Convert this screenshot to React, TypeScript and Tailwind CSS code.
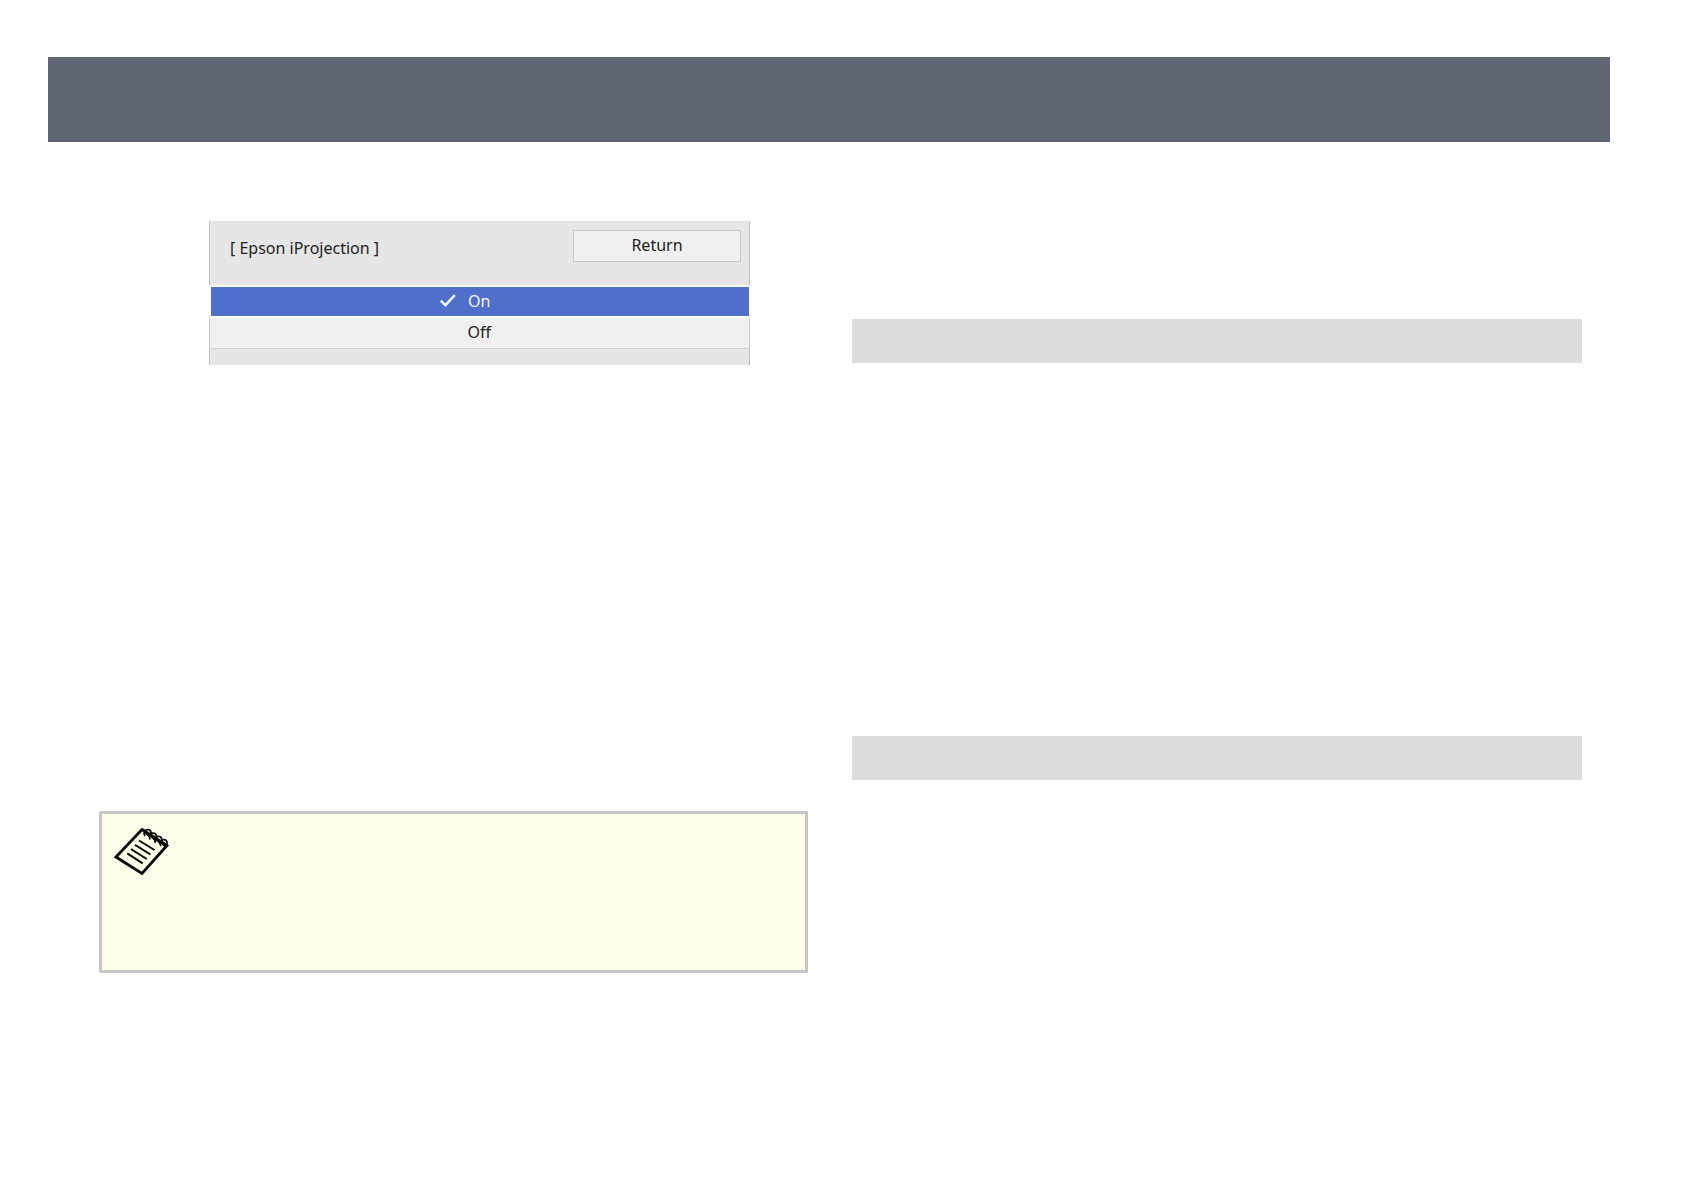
import React, { useState } from 'react';

type ProjectionMode = 'On' | 'Off';

const MODES: ProjectionMode[] = ['On', 'Off'];

const CheckIcon: React.FC = () => (
    <svg className="h-4 w-4" viewBox="0 0 16 16" fill="none" aria-hidden="true">
        <path d="M0.8 7.6L5.4 12.2L14.8 2.2" stroke="currentColor" strokeWidth="2.5" />
    </svg>
);

const NotebookIcon: React.FC = () => (
    <svg className="h-12 w-14" viewBox="0 0 56 48" fill="none" stroke="#0a0a08" aria-hidden="true">
        <path d="M28 1.5L53 17.5L28 45.5L2 29Z" strokeWidth="2.8" />
        <path d="M25 12.5L40.5 22M21 16.8L36.5 26.5M17 21.2L32.8 31M13.2 25.3L28.7 35.3" strokeWidth="2" />
        <path
            d="M31 8C29 5 30.5 2 33.5 1.7C36.5 1.5 38 4.2 36.5 7.2M36.3 11.5C34.3 8.5 35.8 5.5 38.8 5.2C41.8 5 43.3 7.7 41.8 10.7M41.7 14.7C39.7 11.7 41.2 8.7 44.2 8.4C47.2 8.2 48.7 10.9 47.2 13.9M47 18C45 15 46.5 12 49.5 11.7C52.5 11.5 54 14.2 52.5 17.2"
            strokeWidth="1.8"
        />
        <path d="M31.5 4.5L36 9M37 8L41.5 12.5M42.3 11.3L46.8 15.8M47.5 14.8L52 19.3" strokeWidth="2" />
    </svg>
);

const ProjectionMenu: React.FC = () => {
    const [mode, setMode] = useState<ProjectionMode>('On');

    return (
        <section className="ml-[110px] max-w-[541px] text-base text-[#222222]">
            <div className="flex h-16 items-start justify-between border-x border-t border-x-[#bdbdbd] border-t-[#dedede] bg-[#e6e6e6] pt-2 pr-2 pl-5">
                <h2 className="pt-1.5 leading-6">[ Epson iProjection ]</h2>
                <button
                    type="button"
                    className="h-8 w-[168px] border border-[#c9c9c9] bg-[#f0f0f0] pb-0.5 leading-7"
                >
                    Return
                </button>
            </div>
            <div className="pt-0.5">
                {MODES.map((item) => {
                    const selected = item === mode;

                    return (
                        <button
                            key={item}
                            type="button"
                            aria-pressed={selected}
                            onClick={() => setMode(item)}
                            className={`grid h-[31px] w-full grid-cols-[1fr_24px_1fr] items-center pb-0.5 ${
                                selected
                                    ? 'border-r border-b-2 border-l-2 border-white bg-[#4f6fca] text-[#f4f6ff]'
                                    : 'border-x border-b border-x-[#c8c8c8] border-b-[#cfcfcf] bg-[#f0f0f0]'
                            }`}
                        >
                            <span className="flex justify-end pr-3">{selected && <CheckIcon />}</span>
                            <span className="text-left leading-6">{item}</span>
                        </button>
                    );
                })}
            </div>
            <div className="h-4 border-x border-[#bdbdbd] bg-[#e6e6e6]" />
        </section>
    );
};

export default function App() {
    return (
        <div className="min-h-screen bg-white pt-[57px] font-['Noto_Sans',sans-serif]">
            <header className="mr-[74px] ml-12 h-[85px] bg-[#5f6573]" />
            <main className="grid grid-cols-[709fr_730fr] gap-11 pr-[102px] pl-[99px]">
                <div className="min-w-0 pt-[79px]">
                    <ProjectionMenu />
                    <aside className="mt-[446px] h-[162px] border-3 border-[#c6c6c4] bg-[#fffcea] pt-3.5 pl-3">
                        <NotebookIcon />
                    </aside>
                </div>
                <div className="flex min-w-0 flex-col gap-[373px] pt-[177px]">
                    <div className="h-11 bg-[#dddddd]" />
                    <div className="h-11 bg-[#dddddd]" />
                </div>
            </main>
        </div>
    );
}
